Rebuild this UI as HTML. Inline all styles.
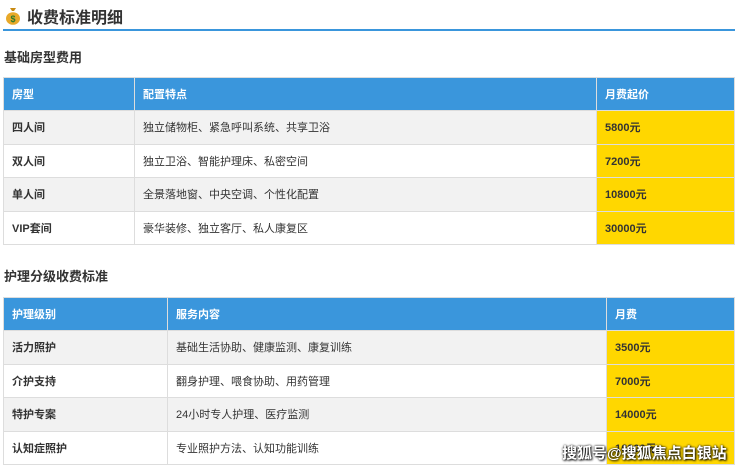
<!DOCTYPE html>
<html><head><meta charset="utf-8"><style>
body{margin:0;width:740px;height:469px;overflow:hidden;background:#fff;font-family:"Liberation Sans","Noto Sans CJK SC",sans-serif;color:#333;position:relative}
.t{position:absolute;left:5px;top:4px;font-size:16px;font-weight:bold;color:#333;display:flex;align-items:center}
.t .ic{width:16px;height:18px;margin-right:6px}
.line{position:absolute;left:3px;top:29px;width:732px;height:2px;background:#3a96dc}
h3{position:absolute;left:4px;margin:0;font-size:13px;font-weight:bold;color:#333}
table{position:absolute;left:3px;width:732px;border-collapse:collapse;font-size:11px}
td,th{border:1px solid #ddd;padding:0 0 0 8px;text-align:left;height:33.5px;box-sizing:border-box}
th{background:#3a96dc;color:#fff;font-weight:bold;font-size:11px}
td.n{font-weight:bold;color:#333}
tr.g td{background:#f2f2f2}
td.p{background:#ffd700!important;font-weight:bold;color:#333}
.wm{position:absolute;left:562px;top:442px;font-size:15px;color:#fff;font-weight:bold;text-shadow:0 0 2px #000,1px 1px 2px #000}
</style></head><body>
<div class="t"><svg class="ic" viewBox="0 0 16 18"><path d="M5 1h6l-2 3H7z" fill="#c88a12"/><ellipse cx="8" cy="11.5" rx="7" ry="6.3" fill="#e8a92a"/><text x="8" y="15" font-size="9" text-anchor="middle" fill="#2a7a2a" font-weight="bold">$</text></svg>收费标准明细</div>
<div class="line"></div>
<h3 style="top:47px">基础房型费用</h3>
<table style="top:77px">
<tr><th style="width:131px;height:33px">房型</th><th style="width:462px;height:33px">配置特点</th><th style="height:33px">月费起价</th></tr>
<tr class="g"><td class="n">四人间</td><td>独立储物柜、紧急呼叫系统、共享卫浴</td><td class="p">5800元</td></tr>
<tr><td class="n">双人间</td><td>独立卫浴、智能护理床、私密空间</td><td class="p">7200元</td></tr>
<tr class="g"><td class="n">单人间</td><td>全景落地窗、中央空调、个性化配置</td><td class="p">10800元</td></tr>
<tr><td class="n">VIP套间</td><td>豪华装修、独立客厅、私人康复区</td><td class="p">30000元</td></tr>
</table>
<h3 style="top:266px">护理分级收费标准</h3>
<table style="top:297px">
<tr><th style="width:164px;height:33px">护理级别</th><th style="width:439px;height:33px">服务内容</th><th style="height:33px">月费</th></tr>
<tr class="g"><td class="n">活力照护</td><td>基础生活协助、健康监测、康复训练</td><td class="p">3500元</td></tr>
<tr><td class="n">介护支持</td><td>翻身护理、喂食协助、用药管理</td><td class="p">7000元</td></tr>
<tr class="g"><td class="n">特护专案</td><td>24小时专人护理、医疗监测</td><td class="p">14000元</td></tr>
<tr><td class="n">认知症照护</td><td>专业照护方法、认知功能训练</td><td class="p">16000元</td></tr>
</table>
<div class="wm">搜狐号@搜狐焦点白银站</div>
</body></html>
